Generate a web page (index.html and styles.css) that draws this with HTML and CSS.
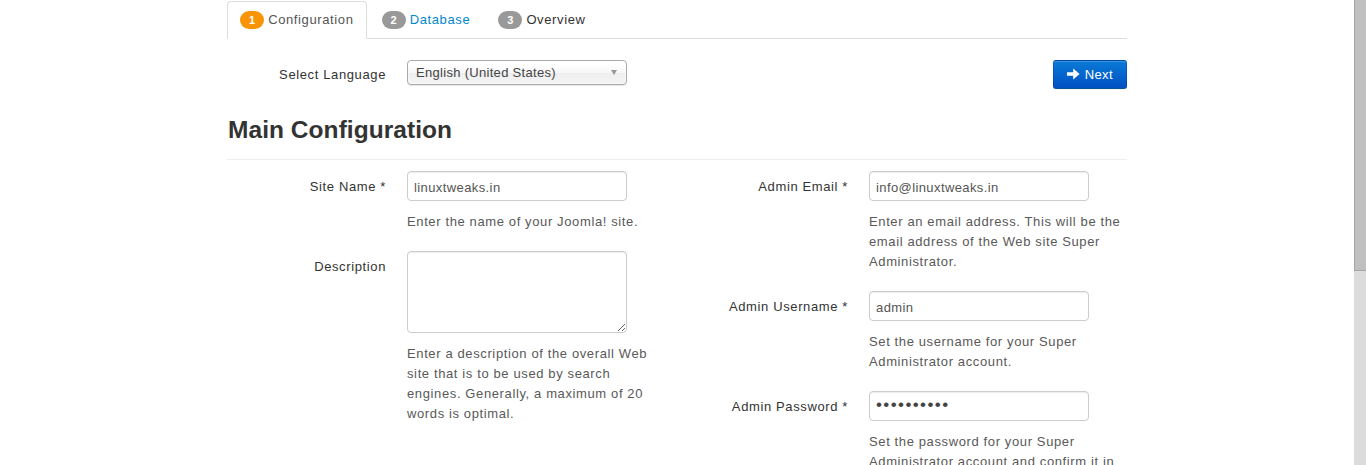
FILE: index.html
```html
<!DOCTYPE html>
<html lang="en">
<head>
<meta charset="utf-8">
<title>Joomla! Web Installer</title>
<link rel="stylesheet" href="styles.css">
</head>
<body>
<div class="viewport">
  <div class="container">
    <ul class="nav-tabs">
      <li class="tab active"><span class="badge badge-warning">1</span><span class="tab-label">Configuration</span></li>
      <li class="tab"><span class="badge">2</span><a class="tab-link" href="#">Database</a></li>
      <li class="tab"><span class="badge">3</span><span class="tab-label dark">Overview</span></li>
    </ul>

    <div class="lang-row">
      <label class="control-label">Select Language</label>
      <div class="chzn-single"><span>English (United States)</span><i class="chzn-arrow"></i></div>
      <button class="btn-primary" type="button">
        <svg class="icon-arrow" width="13" height="12" viewBox="0 0 13 12"><path d="M0 4.2h6.2V0.6L12.6 6 6.2 11.4V7.8H0z" fill="#fff"/></svg>
        <span>Next</span>
      </button>
    </div>

    <h3 class="section-title">Main Configuration</h3>
    <hr class="divider">

    <div class="form-cols">
      <div class="col">
        <div class="control-group">
          <label class="control-label">Site Name *</label>
          <div class="controls">
            <input class="field" type="text" value="linuxtweaks.in">
            <p class="help-block">Enter the name of your Joomla! site.</p>
          </div>
        </div>
        <div class="control-group">
          <label class="control-label">Description</label>
          <div class="controls">
            <textarea class="field area"></textarea>
            <p class="help-block">Enter a description of the overall Web site that is to be used by search engines. Generally, a maximum of 20 words is optimal.</p>
          </div>
        </div>
      </div>
      <div class="col">
        <div class="control-group">
          <label class="control-label">Admin Email *</label>
          <div class="controls">
            <input class="field" type="text" value="info@linuxtweaks.in">
            <p class="help-block">Enter an email address. This will be the email address of the Web site Super Administrator.</p>
          </div>
        </div>
        <div class="control-group">
          <label class="control-label">Admin Username *</label>
          <div class="controls">
            <input class="field" type="text" value="admin">
            <p class="help-block">Set the username for your Super Administrator account.</p>
          </div>
        </div>
        <div class="control-group">
          <label class="control-label">Admin Password *</label>
          <div class="controls">
            <input class="field password" type="password" value="linuxtweak">
            <p class="help-block">Set the password for your Super Administrator account and confirm it in the field below.</p>
          </div>
        </div>
      </div>
    </div>
  </div>
</div>
<div class="scrollbar"><div class="scroll-thumb"></div></div>
</body>
</html>
```

FILE: styles.css
```css
* { box-sizing: border-box; }
html, body { margin: 0; padding: 0; background: #fff; }
body {
  font-family: "Liberation Sans", Arial, Helvetica, sans-serif;
  font-size: 13px;
  line-height: 20px;
  color: #333;
  letter-spacing: 0.62px;
  overflow: hidden;
}
.viewport { margin-right: 12px; padding-top: 1px; }
.container { width: 900px; margin: 0 auto; }

/* tabs */
.nav-tabs {
  list-style: none;
  margin: 0;
  padding: 0;
  display: flex;
  border-bottom: 1px solid #ddd;
}
.tab {
  display: flex;
  align-items: center;
  padding: 8px 12px;
  line-height: 20px;
  margin-right: 2px;
  margin-bottom: -1px;
  border: 1px solid transparent;
  border-radius: 4px 4px 0 0;
}
.tab.active {
  border-color: #ddd;
  border-bottom-color: #fff;
  background: #fff;
}
.badge {
  display: inline-block;
  padding: 2px 9px;
  font-size: 11px;
  font-weight: bold;
  line-height: 14px;
  color: #fff;
  background: #999;
  border-radius: 9px;
  margin-right: 4px;
  letter-spacing: 0;
}
.badge-warning { background: #f89406; }
.tab-label { color: #555; }
.tab-label.dark { color: #333; }
.tab-link { color: #0088cc; text-decoration: none; }

/* language row */
.lang-row {
  display: flex;
  align-items: center;
  margin-top: 20px;
  height: 30px;
}
.control-label {
  width: 160px;
  flex: none;
  text-align: right;
  padding-right: 1px;
  color: #333;
}
.lang-row .control-label { margin-right: 20px; padding-top: 2px; }
.chzn-single {
  position: relative;
  width: 220px;
  height: 25px;
  line-height: 24px;
  padding-left: 8px;
  margin-top: -3px;
  border: 1px solid #aaa;
  border-radius: 4px;
  color: #444;
  letter-spacing: 0.3px;
  background: linear-gradient(#fff 20%, #f6f6f6 50%, #eee 52%, #f4f4f4 100%);
  box-shadow: inset 0 0 3px #fff, 0 1px 1px rgba(0,0,0,0.1);
}
.chzn-arrow {
  position: absolute;
  right: 9px;
  top: 9px;
  width: 0;
  height: 0;
  border-left: 3.5px solid transparent;
  border-right: 3.5px solid transparent;
  border-top: 5px solid #999;
}
.btn-primary {
  margin-left: auto;
  display: flex;
  align-items: center;
  gap: 5px;
  height: 29px;
  padding: 0 13px 0 13px;
  font-family: inherit;
  font-size: 13px;
  letter-spacing: 0.4px;
  color: #fff;
  border: 1px solid rgba(0,0,0,0.15);
  border-bottom-color: rgba(0,0,0,0.3);
  border-radius: 3px;
  background: linear-gradient(#0a7ad6, #0051c4);
  box-shadow: inset 0 1px 0 rgba(255,255,255,0.2), 0 1px 2px rgba(0,0,0,0.05);
}
.icon-arrow { display: block; }

/* heading */
.section-title {
  margin: 21px 0 0 1px;
  font-size: 24.5px;
  line-height: 40px;
  font-weight: bold;
  color: #333;
  letter-spacing: 0.05px;
}
.divider {
  margin: 9px 0 11px;
  border: 0;
  border-top: 1px solid #eee;
  height: 0;
}

/* form */
.form-cols {
  display: grid;
  grid-template-columns: 442px 438px;
  column-gap: 20px;
}
.control-group {
  display: flex;
  margin-bottom: 19px;
}
.control-group .control-label { padding-top: 6px; }
.controls { margin-left: 20px; width: 258px; }
.field {
  display: block;
  width: 220px;
  height: 30px;
  padding: 5px 6px 3px;
  font-family: inherit;
  font-size: 13px;
  letter-spacing: 0.4px;
  color: #555;
  border: 1px solid #ccc;
  border-radius: 4px;
  background: #fff;
  box-shadow: inset 0 1px 1px rgba(0,0,0,0.075);
  outline: none;
}
.field.password {
  font-size: 17px;
  letter-spacing: 1.4px;
  padding: 2px 6px 4px;
  color: #444;
}
.area { height: 82px; resize: both; }
.help-block {
  margin: 11px 0 0;
  color: #595959;
  width: 252px;
}

/* fake browser scrollbar */
.scrollbar {
  position: fixed;
  top: 0;
  right: 0;
  width: 12px;
  height: 100vh;
  background: #dcdcdc;
}
.scroll-thumb {
  height: 271px;
  background: #c0c0c0;
  border-left: 1px solid #a6a6a6;
  border-bottom: 1px solid #a6a6a6;
}
```
